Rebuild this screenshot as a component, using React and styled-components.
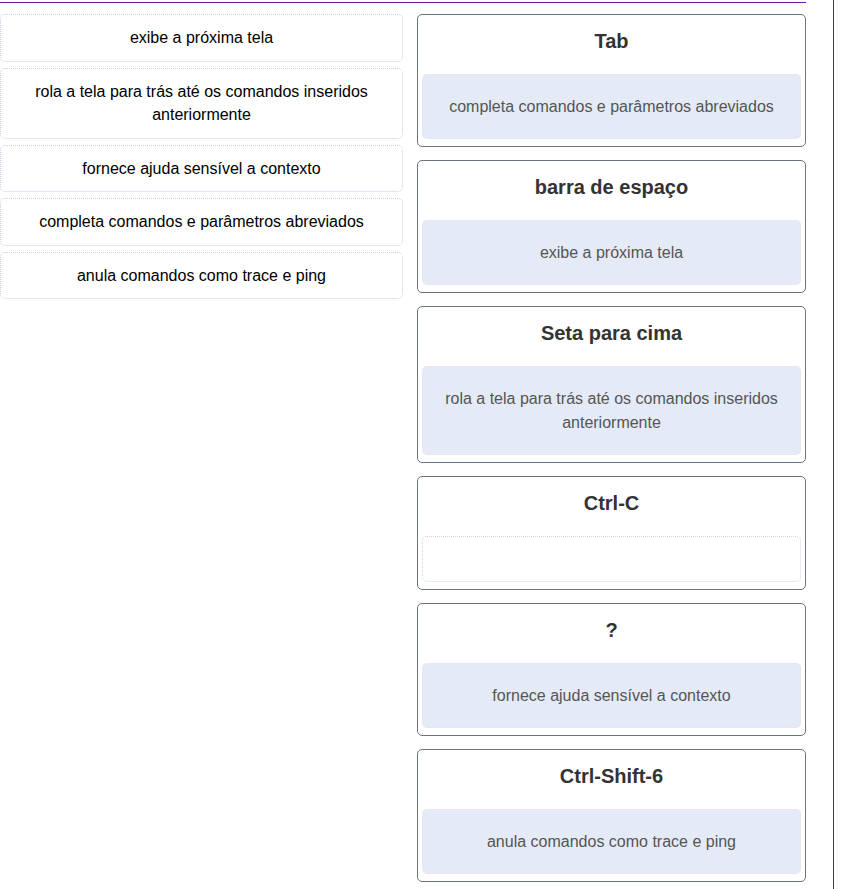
import React from "react";
import styled, { createGlobalStyle } from "styled-components";

const Global = createGlobalStyle`
  html, body { margin: 0; padding: 0; background: #fff; }
  body { font-family: "Liberation Sans", Arial, sans-serif; }
`;

const Page = styled.div`
  width: 834px;
  min-height: 100vh;
  box-sizing: border-box;
  border-right: 1px solid #6a1b9a;
  padding-top: 2px;
`;

const TopRule = styled.div`
  width: 806px;
  height: 1px;
  background: #6a1b9a;
`;

const Columns = styled.div`
  display: grid;
  grid-template-columns: 403px 389px;
  column-gap: 14px;
  align-items: start;
  margin-top: 11px;
`;

const OptionList = styled.div`
  display: flex;
  flex-direction: column;
  gap: 6px;
`;

const Option = styled.div`
  box-sizing: border-box;
  border: 1px dotted #c3d1e0;
  border-radius: 5px;
  padding: 11px 24px 11px;
  text-align: center;
  font-size: 16px;
  line-height: 23.5px;
  color: #000;
`;

const TargetList = styled.div`
  display: flex;
  flex-direction: column;
  gap: 13px;
`;

const Card = styled.div`
  border: 1px solid #6c757d;
  border-radius: 5px;
  padding: 14px 4px 7px;
  display: flex;
  flex-direction: column;
`;

const Title = styled.div`
  font-weight: bold;
  font-size: 20px;
  line-height: 24px;
  color: #333;
  text-align: center;
  margin-bottom: 21px;
`;

const Drop = styled.div`
  box-sizing: border-box;
  border: 1px dotted ${(p) => (p.$empty ? "#d6d0ee" : "#f2dcf2")};
  border-radius: 5px;
  background: ${(p) => (p.$empty ? "#fff" : "#e4ebf6")};
  min-height: 46px;
  padding: 20px 20px 19px;
  text-align: center;
  font-size: 16px;
  line-height: 24px;
  color: #555;
`;

const options = [
  "exibe a próxima tela",
  "rola a tela para trás até os comandos inseridos anteriormente",
  "fornece ajuda sensível a contexto",
  "completa comandos e parâmetros abreviados",
  "anula comandos como trace e ping",
];

const targets = [
  ["Tab", "completa comandos e parâmetros abreviados"],
  ["barra de espaço", "exibe a próxima tela"],
  ["Seta para cima", "rola a tela para trás até os comandos inseridos anteriormente"],
  ["Ctrl-C", ""],
  ["?", "fornece ajuda sensível a contexto"],
  ["Ctrl-Shift-6", "anula comandos como trace e ping"],
];

export default function App() {
  return (
    <>
      <Global />
      <Page>
        <TopRule />
        <Columns>
          <OptionList>
            {options.map((o) => (
              <Option key={o}>{o}</Option>
            ))}
          </OptionList>
          <TargetList>
            {targets.map(([t, a]) => (
              <Card key={t}>
                <Title>{t}</Title>
                <Drop $empty={!a}>{a}</Drop>
              </Card>
            ))}
          </TargetList>
        </Columns>
      </Page>
    </>
  );
}
